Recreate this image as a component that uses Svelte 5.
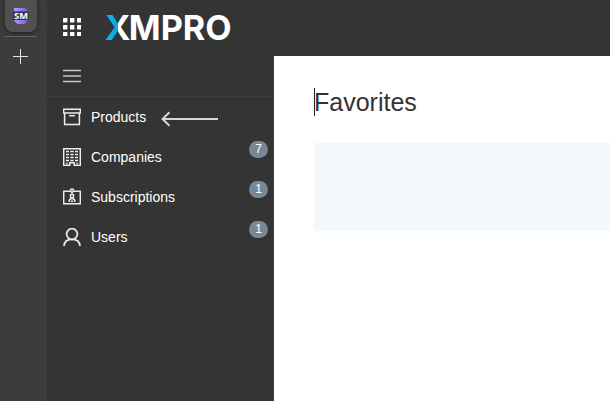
<script>
  const items = [
    { label: 'Products', icon: 'box', arrow: true },
    { label: 'Companies', icon: 'building', count: 7 },
    { label: 'Subscriptions', icon: 'badge', count: 1 },
    { label: 'Users', icon: 'user', count: 1 }
  ];
  const cells = [0, 7, 14];
  const windows = [3.5, 6.5, 9.5, 12.5];
</script>

<div class="app">
  <aside class="rail">
    <div class="tile">
      <svg width="16" height="16" viewBox="0 0 16 16">
        <defs>
          <linearGradient id="violet"><stop offset="0" stop-color="#b99aff" /><stop offset="1" stop-color="#7054e8" /></linearGradient>
        </defs>
        <path d="M1 0H12Q14.5 1 15 3.5H1Z" fill="url(#violet)" />
        <path d="M1 11.5H15Q14 15 11.5 16H4.5Q2 15 1 11.5Z" fill="url(#violet)" />
        <rect x="0" y="3.5" width="16" height="8.5" fill="#303b4b" />
        <text x="1" y="11" textLength="14" lengthAdjust="spacingAndGlyphs" class="sm">SM</text>
      </svg>
    </div>
    <div class="rule"></div>
    <svg class="plus" width="15" height="15" viewBox="0 0 15 15"><path d="M7.5 0V15M0 7.5H15" stroke="#e4e4e4" stroke-width="1" /></svg>
  </aside>

  <div class="portal">
    <header>
      <svg class="apps" width="18" height="18" viewBox="0 0 18 18" fill="#fff">
        {#each cells as y}{#each cells as x}<rect {x} {y} width="4.4" height="4.4" rx=".4" />{/each}{/each}
      </svg>
      <svg class="logo" width="126" height="30" viewBox="0 0 126 30">
        <defs>
          <linearGradient id="split" gradientUnits="userSpaceOnUse" x1="0" y1="28" x2="13.5" y2="28">
            <stop offset="0" stop-color="#00c4e8" /><stop offset=".98" stop-color="#159fe0" /><stop offset="1" stop-color="#fff" />
          </linearGradient>
        </defs>
        <text y="27.5" class="brand"><tspan x="0" fill="url(#split)">X</tspan><tspan x="23.8" textLength="102.8" lengthAdjust="spacingAndGlyphs">MPRO</tspan></text>
      </svg>
    </header>

    <div class="body">
      <nav>
        <div class="toggle">
          <svg width="18" height="14" viewBox="0 0 18 14"><path d="M0 1.5H18M0 7H18M0 12.5H18" stroke="#c4c4c4" stroke-width="1.7" /></svg>
        </div>
        {#each items as item}
          <div class="item">
            <svg class="icon" width="18" height="18" viewBox="0 0 18 18" fill="none" stroke="#ececec" stroke-width="1.5">
              {#if item.icon === 'box'}
                <path d="M.7 1.2H17.3V4.9H.7ZM1.6 4.9V16.6H16.4V4.9M6.2 7.8H11.8" />
              {:else if item.icon === 'building'}
                <path d="M.7 .7H17.3V17.3H11.2V14.8H6.8V17.3H.7Z" />
                {#each windows as y}
                  <path d="M3 {y}H6M7.3 {y}H10.7M12 {y}H15" stroke-width="1.4" />
                {/each}
                <path d="M3 15.2H5M13 15.2H15" stroke-width="1" />
              {:else if item.icon === 'badge'}
                <path d="M7 3.2H.7V15.8H17.3V3.2H11" />
                <circle cx="9" cy="2.4" r="1.5" />
                <path d="M9 4V5.5" />
                <circle cx="9" cy="8" r="1.7" />
                <path d="M6.2 14V12.8Q6.5 10.4 9 10.4T11.8 12.8V14M8 13.2H10" />
              {:else}
                <circle cx="9" cy="6.1" r="5.4" stroke-width="1.7" />
                <path d="M1 18Q1.5 11.4 9 11.4T17 18" stroke-width="1.7" />
              {/if}
            </svg>
            <span>{item.label}</span>
            {#if item.arrow}
              <svg class="arrow" width="58" height="16" viewBox="0 0 58 16"><path d="M57 8H1.5M8.5 1.3L1.5 8L8.5 14.7" fill="none" stroke="#d6d8d5" stroke-width="1.9" /></svg>
            {/if}
            {#if item.count}<b class="count">{item.count}</b>{/if}
          </div>
        {/each}
      </nav>
      <main>
        <h1>Favorites</h1>
        <div class="panel"></div>
      </main>
    </div>
  </div>
</div>

<style>
  :global(body) { background: #fff; overflow: hidden; }
  .app { display: flex; width: 610px; height: 401px; font-family: "Liberation Sans", Arial, sans-serif; }
  .rail { width: 47px; background: #3c3c3c; display: flex; flex-direction: column; align-items: center; flex: none; box-sizing: border-box; padding-right: 5px; }
  .tile { width: 32px; height: 32px; background: #505050; border-radius: 0 0 8px 8px; box-shadow: 0 1px 4px #1d1d1d; display: flex; justify-content: center; padding-top: 8px; box-sizing: border-box; }
  .rule { width: 32px; height: 1px; background: #626262; margin-top: 4px; }
  .plus { margin: 12px 0 0 -1px; }
  .sm { font: 700 9px "Open Sans", sans-serif; fill: #fff; }
  .portal { flex: 1; min-width: 0; background: #343434; display: flex; flex-direction: column; }
  header { height: 56px; display: flex; flex: none; }
  .apps { margin: 18px 0 0 16px; }
  .logo { margin: 12px 0 0 24px; overflow: visible; }
  .brand { font: 700 34.5px Inter, sans-serif; fill: #fff; }
  .body { flex: 1; display: flex; }
  nav { width: 227px; box-sizing: border-box; border-right: 1px solid #3b3b3b; flex: none; }
  .toggle { box-sizing: border-box; height: 41px; border-bottom: 1px solid #35404b; display: flex; align-items: center; padding-left: 16px; }
  .item { height: 40px; display: flex; align-items: center; padding-left: 16px; position: relative; color: #fff; font-size: 14px; }
  .icon { margin-right: 10px; flex: none; }
  .arrow { margin: 4px 0 0 15px; }
  .count { position: absolute; right: 5px; top: 4px; width: 19px; height: 17px; border-radius: 9px; background: #778899; font-size: 12px; line-height: 17px; text-align: center; font-weight: 400; }
  main { flex: 1; background: #fff; padding: 32px 0 0 40px; min-width: 0; }
  h1 { margin: 0; font-size: 25px; line-height: 28px; font-weight: 400; color: #333; box-shadow: inset 1px 0 #222; }
  .panel { margin-top: 27px; height: 88px; background: #f3f8fc; }
</style>
